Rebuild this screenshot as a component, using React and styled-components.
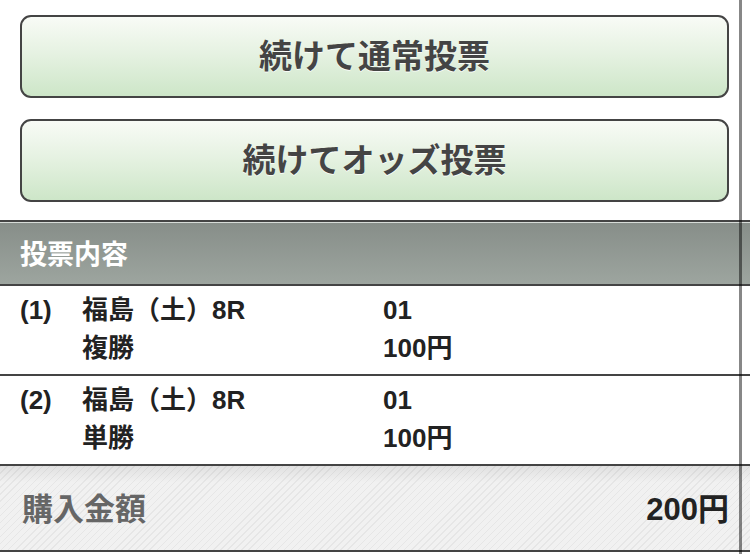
import React from "react";
import styled, { createGlobalStyle } from "styled-components";

const GlobalStyle = createGlobalStyle`
    html, body {
        margin: 0;
        padding: 0;
        background: #fff;
    }
    body {
        font-family: "Liberation Sans", "Noto Sans CJK JP", sans-serif;
        color: #222;
    }
`;

const Page = styled.div`
    position: relative;
    width: 750px;
    height: 554px;
    overflow: hidden;
    background: #fff;
`;

const Buttons = styled.div`
    display: flex;
    flex-direction: column;
    gap: 21px;
    padding: 15px 21px 18px 20px;
`;

const BigButton = styled.button`
    height: 83px;
    padding: 0 0 6px;
    border: 2px solid #444;
    border-radius: 11px;
    background: linear-gradient(to bottom, #f8fbf6 0%, #e4f1e0 50%, #cde6c8 100%);
    font-family: "Liberation Sans", "Noto Sans CJK JP", sans-serif;
    font-size: 33px;
    font-weight: 700;
    color: #444;
    text-shadow: 0 1px 0 rgba(255, 255, 255, 0.8);
    cursor: pointer;
`;

const Section = styled.section`
    border-top: 2px solid #444;
`;

const SectionHeader = styled.h2`
    margin: 0;
    height: 64px;
    box-sizing: border-box;
    display: flex;
    align-items: center;
    padding: 0 20px 2px;
    border-top: 1px solid #d7dcd8;
    border-bottom: 2px solid #444;
    background: linear-gradient(to bottom, #878e89 0%, #9da59f 100%);
    color: #fff;
    font-size: 27px;
    font-weight: 700;
`;

const Bet = styled.div`
    display: grid;
    grid-template-columns: 62px 301px 1fr;
    grid-auto-rows: 38px;
    align-items: center;
    height: 90px;
    box-sizing: border-box;
    padding: 5px 20px 7px;
    border-bottom: 2px solid #444;
    font-size: 26px;
    line-height: 38px;
    font-weight: 700;
    color: #222;
`;

const Cell = styled.span`
    white-space: nowrap;
`;

const Total = styled.div`
    height: 86px;
    box-sizing: border-box;
    display: flex;
    align-items: center;
    justify-content: space-between;
    padding: 0 21px 4px 22px;
    border-bottom: 2px solid #444;
    background:
        linear-gradient(to bottom, rgba(0, 0, 0, 0.07) 0%, rgba(0, 0, 0, 0) 20%),
        repeating-linear-gradient(-45deg, #f1f1f1 0px, #f1f1f1 4px, #e6e6e6 4px, #e6e6e6 5px);
    font-weight: 700;
`;

const TotalLabel = styled.span`
    font-size: 31px;
    color: #666;
`;

const TotalValue = styled.span`
    font-size: 31px;
    color: #222;
`;

const EdgeLine = styled.div`
    position: absolute;
    top: 0;
    bottom: 0;
    left: 739px;
    width: 3px;
    background: rgba(0, 0, 0, 0.47);
    pointer-events: none;
`;

const bets = [
    { no: "(1)", race: "福島（土）8R", horse: "01", kind: "複勝", amount: "100円" },
    { no: "(2)", race: "福島（土）8R", horse: "01", kind: "単勝", amount: "100円" },
];

const App = () => (
    <Page>
        <GlobalStyle />
        <Buttons>
            <BigButton>続けて通常投票</BigButton>
            <BigButton>続けてオッズ投票</BigButton>
        </Buttons>
        <Section>
            <SectionHeader>投票内容</SectionHeader>
            {bets.map(b => (
                <Bet key={b.no}>
                    <Cell>{b.no}</Cell>
                    <Cell>{b.race}</Cell>
                    <Cell>{b.horse}</Cell>
                    <Cell />
                    <Cell>{b.kind}</Cell>
                    <Cell>{b.amount}</Cell>
                </Bet>
            ))}
            <Total>
                <TotalLabel>購入金額</TotalLabel>
                <TotalValue>200円</TotalValue>
            </Total>
        </Section>
        <EdgeLine />
    </Page>
);

export default App;
